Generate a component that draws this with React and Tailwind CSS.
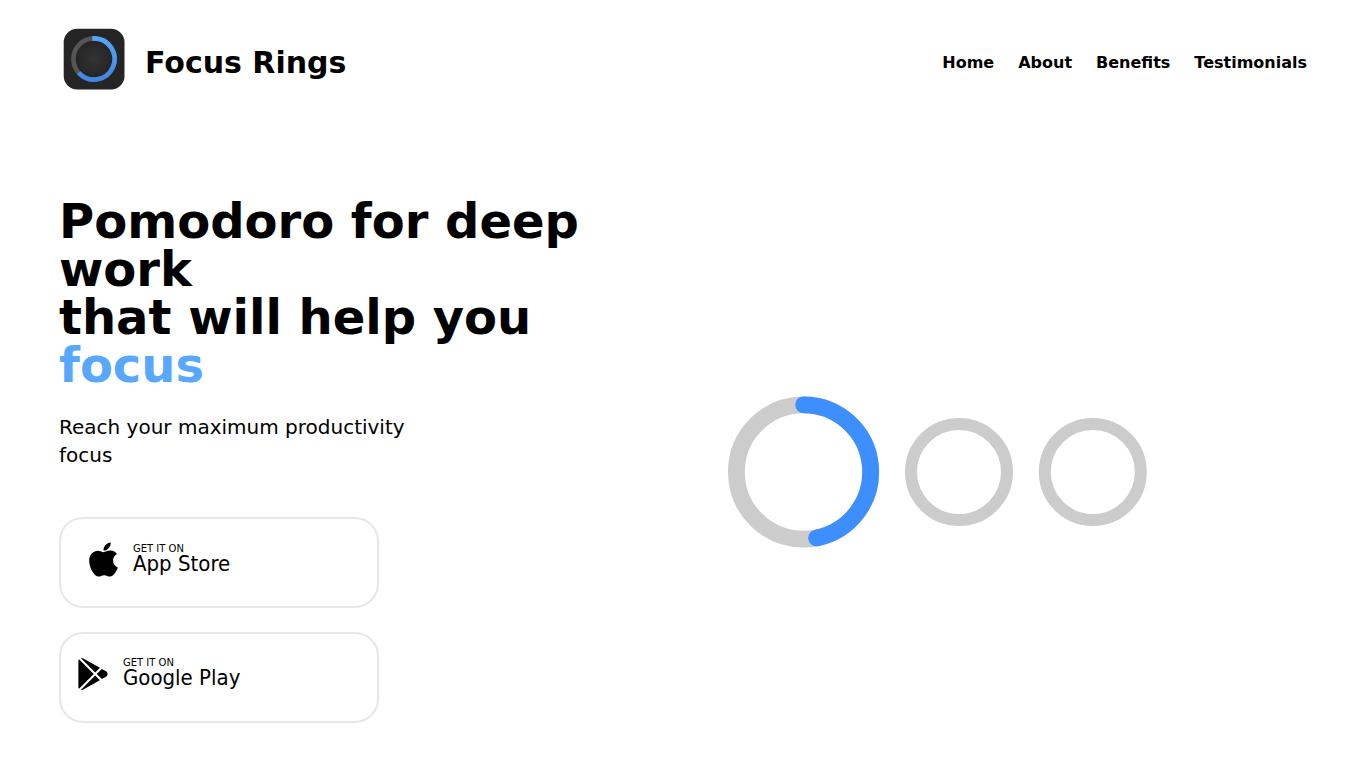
import React from "react";
import { FaApple } from "react-icons/fa";

const links = ["Home", "About", "Benefits", "Testimonials"];

function Logo() {
  return (
    <svg viewBox="0 0 70 70" className="size-[70px] shrink-0" aria-hidden="true">
      <defs>
        <radialGradient id="dial">
          <stop offset="0" stopColor="#343434" />
          <stop offset="1" stopColor="#252525" />
        </radialGradient>
        <linearGradient id="arc" x1="0" y1="0" x2="0" y2="1">
          <stop offset="0" stopColor="#55a4fb" />
          <stop offset="1" stopColor="#3f87e6" />
        </linearGradient>
      </defs>
      <rect x="4.7" y="4.7" width="60.8" height="60.8" rx="13.5" fill="#252525" />
      <circle cx="35" cy="35" r="18" fill="url(#dial)" />
      <circle cx="35" cy="35" r="20.6" fill="none" stroke="#555" strokeWidth="4.6" />
      <path d="M33.3 14.4 H35 A20.6 20.6 0 1 1 19.7 48.8" fill="none" stroke="url(#arc)" strokeWidth="4.6" />
    </svg>
  );
}

function PlayIcon() {
  return (
    <svg viewBox="0 0 512 512" className="mr-3.5 size-8 shrink-0" fill="currentColor" aria-hidden="true">
      <path d="M99.617 8.057a50.191 50.191 0 00-38.815-6.713l230.932 230.933 74.846-74.846L99.617 8.057zM32.139 20.116c-6.441 8.563-10.148 19.077-10.148 30.199v411.358c0 11.123 3.708 21.636 10.148 30.199l235.877-235.877L32.139 20.116zM464.261 212.087l-67.266-37.637-81.544 81.544 81.548 81.548 67.273-37.64c16.117-9.03 25.738-25.442 25.738-43.908s-9.621-34.877-25.749-43.907zM291.733 279.711L60.815 510.629c3.786.891 7.639 1.371 11.492 1.371a50.275 50.275 0 0027.31-8.07l266.965-149.372-74.849-74.847z" />
    </svg>
  );
}

function StoreLink({ name, icon, className }) {
  return (
    <a
      href="#"
      className={`flex w-80 items-center rounded-3xl border-2 border-gray-200 ${className}`}
    >
      {icon}
      <span className="flex flex-col pb-1">
        <span className="text-[10px] leading-3">GET IT ON</span>
        <span className="font-['DejaVu_Sans_Condensed','DejaVu_Sans',sans-serif] text-[22px] leading-[18px]">
          {name}
        </span>
      </span>
    </a>
  );
}

function Rings() {
  return (
    <svg viewBox="0 0 420 152" className="w-[420px] max-w-full" fill="none" role="img" aria-label="Focus progress">
      <g stroke="#ccc">
        <circle cx="75.6" cy="76" r="67.2" strokeWidth="16.8" />
        <circle cx="231" cy="76" r="48" strokeWidth="12" />
        <circle cx="364.8" cy="76" r="48" strokeWidth="12" />
      </g>
      <path d="M75.6 8.8 A67.2 67.2 0 0 1 88.6 141.9" stroke="#3d8eff" strokeWidth="16.8" strokeLinecap="round" />
    </svg>
  );
}

export default function App() {
  return (
    <div className="bg-white font-['DejaVu_Sans',sans-serif] text-black">
      <header className="flex items-center justify-between px-[59px] pt-6">
        <a href="#" className="flex items-center gap-4">
          <Logo />
          <span className="pt-2 text-3xl font-bold">Focus Rings</span>
        </a>
        <nav className="flex gap-6 pt-2 font-bold">
          {links.map((link) => (
            <a key={link} href={`#${link.toLowerCase()}`}>
              {link}
            </a>
          ))}
        </nav>
      </header>
      <main className="grid grid-cols-2 px-[59px] pt-[103px] pb-11">
        <section>
          <h1 className="text-5xl leading-none font-bold">
            Pomodoro for deep work
            <br />
            that will help you <span className="text-[#58a8ff]">focus</span>
          </h1>
          <p className="mt-6 max-w-96 text-xl">Reach your maximum productivity focus</p>
          <div className="mt-12 flex flex-col gap-6">
            <StoreLink
              name="App Store"
              icon={<FaApple className="mr-2.5 size-[39px] shrink-0" aria-hidden="true" />}
              className="pt-[21px] pb-[27px] pl-[23px]"
            />
            <StoreLink
              name="Google Play"
              icon={<PlayIcon />}
              className="pt-[23px] pb-[30px] pl-4"
            />
          </div>
        </section>
        <section className="flex items-center pt-6 pl-[45px]">
          <Rings />
        </section>
      </main>
    </div>
  );
}
